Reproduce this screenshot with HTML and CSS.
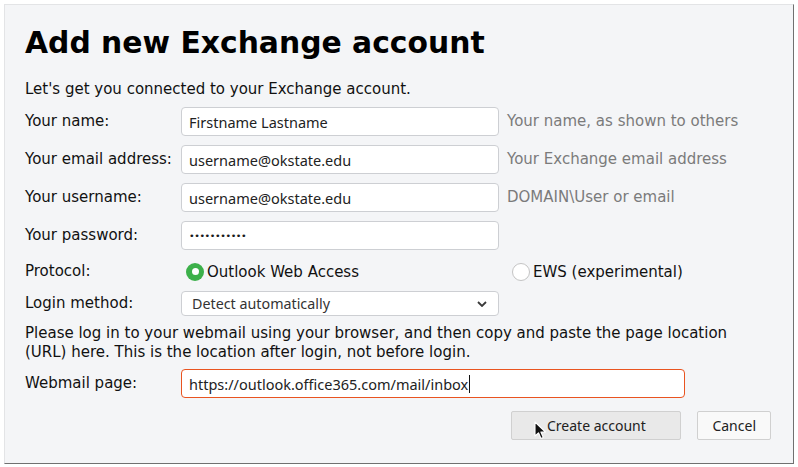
FILE: index.html
```html
<!DOCTYPE html>
<html>
<head>
<meta charset="utf-8">
<link rel="stylesheet" href="styles.css">
</head>
<body>
<div class="window">
  <h1 class="title">Add new Exchange account</h1>
  <p class="intro">Let's get you connected to your Exchange account.</p>

  <div class="row">
    <div class="label">Your name:</div>
    <div class="field"><span class="value">Firstname Lastname</span></div>
    <div class="hint">Your name, as shown to others</div>
  </div>
  <div class="row">
    <div class="label">Your email address:</div>
    <div class="field"><span class="value">username@okstate.edu</span></div>
    <div class="hint">Your Exchange email address</div>
  </div>
  <div class="row">
    <div class="label">Your username:</div>
    <div class="field"><span class="value">username@okstate.edu</span></div>
    <div class="hint">DOMAIN\User or email</div>
  </div>
  <div class="row">
    <div class="label">Your password:</div>
    <div class="field"><span class="value dots">•••••••••••</span></div>
  </div>
  <div class="row row-protocol">
    <div class="label">Protocol:</div>
    <div class="radio-wrap"><span class="radio checked"></span><span class="radio-label">Outlook Web Access</span></div>
    <div class="radio-wrap radio-right"><span class="radio"></span><span class="radio-label">EWS (experimental)</span></div>
  </div>
  <div class="row row-select">
    <div class="label">Login method:</div>
    <div class="select">
      <span class="value">Detect automatically</span>
      <svg class="chevron" width="10" height="6" viewBox="0 0 10 6"><path d="M1 1 L5 5 L9 1" fill="none" stroke="#3a3a3a" stroke-width="1.8"/></svg>
    </div>
  </div>
  <p class="note">Please log in to your webmail using your browser, and then copy and paste the page location (URL) here. This is the location after login, not before login.</p>
  <div class="row row-webmail">
    <div class="label">Webmail page:</div>
    <div class="field field-wide focused"><span class="value">https://outlook.office365.com/mail/inbox</span><span class="caret"></span></div>
  </div>
  <div class="buttons">
    <div class="btn btn-primary">Create account</div>
    <div class="btn">Cancel</div>
  </div>
  <svg class="pointer" width="14" height="20" viewBox="0 0 14 20"><path d="M1 1 L1 15 L4.5 11.8 L7 17.5 L9.3 16.5 L6.9 11 L11.5 11 Z" fill="#111" stroke="#fff" stroke-width="1.1" stroke-linejoin="round"/></svg>
</div>
</body>
</html>
```

FILE: styles.css
```css
html, body {
  margin: 0;
  padding: 0;
  background: #ffffff;
}

body {
  font-family: "DejaVu Sans", sans-serif;
  color: #111111;
}

.window {
  position: relative;
  box-sizing: border-box;
  margin: 4px 0 0 4px;
  width: 790px;
  height: 460px;
  border-top: 1px solid #e3e4e6;
  border-left: 1px solid #e3e4e6;
  border-right: 1px solid #707070;
  border-bottom: 1px solid #707070;
  background: #f4f5f7;
  padding: 0 0 0 20px;
}

.title {
  margin: 19px 0 0 0;
  font-size: 29.8px;
  line-height: 38px;
  font-weight: bold;
  color: #000;
}

.intro {
  margin: 18px 0 0 0;
  font-size: 15px;
  line-height: 19px;
}

.row {
  display: grid;
  grid-template-columns: 156px 326px 1fr;
  align-items: center;
  height: 29px;
  margin-top: 9px;
}

.intro + .row {
  margin-top: 8px;
}

.label {
  font-size: 15px;
  line-height: 19px;
}

.field, .select {
  box-sizing: border-box;
  width: 318px;
  height: 29px;
  background: #ffffff;
  border: 1px solid #cdcfd3;
  border-radius: 4px;
  display: flex;
  align-items: center;
  padding: 0 7px;
}

.value {
  font-family: "Noto Sans", sans-serif;
  font-size: 14.5px;
  color: #222;
  white-space: nowrap;
}

.dots {
  font-family: "DejaVu Sans", sans-serif;
  font-size: 9.5px;
  letter-spacing: -0.4px;
  color: #1a1a1a;
}

.hint {
  font-size: 15px;
  line-height: 19px;
  color: #7b7b7b;
  padding-left: 0;
}

.row-protocol {
  height: 26px;
  margin-top: 8px;
}

.radio-wrap {
  display: flex;
  align-items: center;
  padding-left: 5px;
  padding-top: 3px;
}

.radio-right {
  padding-left: 5px;
}

.radio {
  box-sizing: border-box;
  width: 18px;
  height: 18px;
  border-radius: 50%;
  border: 1px solid #c4c4c4;
  background: #ffffff;
  margin-right: 3px;
  position: relative;
  top: -1px;
}

.radio.checked {
  border: none;
  background: #3cb04a;
}

.radio.checked::after {
  content: "";
  position: absolute;
  left: 5.5px;
  top: 5.5px;
  width: 7px;
  height: 7px;
  border-radius: 50%;
  background: #ffffff;
}

.radio-label {
  font-size: 15px;
  line-height: 19px;
}

.row-select {
  height: 25px;
  margin-top: 7px;
}

.select {
  height: 25px;
  padding: 0 10px;
  justify-content: space-between;
}

.select .value {
  font-size: 14.3px;
  color: #333;
}

.chevron {
  margin-right: 1px;
}

.note {
  margin: 8px 0 0 0;
  width: 745px;
  font-size: 15px;
  line-height: 19px;
}

.row-webmail {
  margin-top: 7px;
}

.field-wide {
  width: 504px;
  border-color: #e95420;
}

.caret {
  display: inline-block;
  width: 1px;
  height: 18px;
  background: #111;
  margin-left: 1px;
}

.buttons {
  display: flex;
  justify-content: flex-end;
  gap: 16px;
  margin-top: 13px;
  padding-right: 22px;
}

.btn {
  box-sizing: border-box;
  height: 29px;
  display: flex;
  align-items: center;
  justify-content: center;
  padding: 0 14px;
  border: 1px solid #d0d0d0;
  border-radius: 2px;
  background: #f9f9f9;
  font-family: "Noto Sans", sans-serif;
  font-size: 14px;
  color: #222;
}

.btn-primary {
  width: 170px;
  background: #e9e9e9;
}

.pointer {
  position: absolute;
  left: 529px;
  top: 416px;
}
```
